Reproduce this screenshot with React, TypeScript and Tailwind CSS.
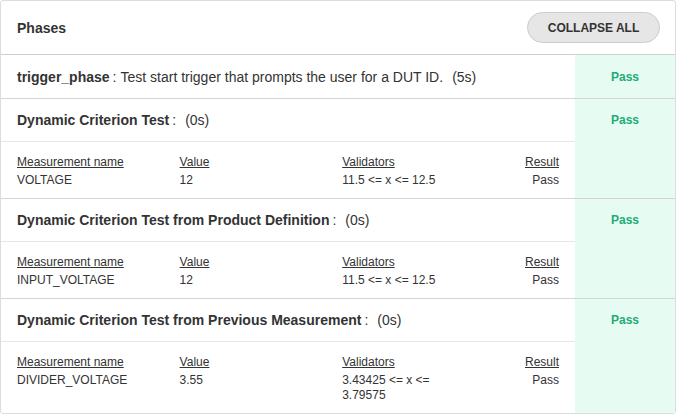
import React from "react";

interface Measurement {
  name: string;
  value: string;
  validators: string;
  result: string;
}

interface Phase {
  name: string;
  description?: string;
  duration: string;
  status: string;
  measurements?: Measurement[];
}

const phases: Phase[] = [
  {
    name: "trigger_phase",
    description: "Test start trigger that prompts the user for a DUT ID.",
    duration: "(5s)",
    status: "Pass",
  },
  {
    name: "Dynamic Criterion Test",
    duration: "(0s)",
    status: "Pass",
    measurements: [{ name: "VOLTAGE", value: "12", validators: "11.5 <= x <= 12.5", result: "Pass" }],
  },
  {
    name: "Dynamic Criterion Test from Product Definition",
    duration: "(0s)",
    status: "Pass",
    measurements: [{ name: "INPUT_VOLTAGE", value: "12", validators: "11.5 <= x <= 12.5", result: "Pass" }],
  },
  {
    name: "Dynamic Criterion Test from Previous Measurement",
    duration: "(0s)",
    status: "Pass",
    measurements: [
      { name: "DIVIDER_VOLTAGE", value: "3.55", validators: "3.43425 <= x <= 3.79575", result: "Pass" },
    ],
  },
];

function MeasurementTable({ rows }: { rows: Measurement[] }) {
  return (
    <div className="border-t border-[#e6e6e6] px-4 pt-[13px] pb-[10px] text-xs leading-[15px] text-[#333]">
      <div className="grid grid-cols-[30%_30%_25%_15%] gap-y-[3px]">
        <div className="underline">Measurement name</div>
        <div className="underline">Value</div>
        <div className="underline">Validators</div>
        <div className="text-right underline">Result</div>
        {rows.map((m) => (
          <React.Fragment key={m.name}>
            <div>{m.name}</div>
            <div>{m.value}</div>
            <div className="pr-2">{m.validators}</div>
            <div className="text-right">{m.result}</div>
          </React.Fragment>
        ))}
      </div>
    </div>
  );
}

export default function App() {
  return (
    <div className="w-[676px] bg-white font-['Liberation_Sans',Arial,sans-serif] text-[#333]">
      <div className="rounded-[3px] border border-[#dcdcdc]">
        {/* Header */}
        <div className="flex h-[54px] items-center justify-between border-b border-[#cfcfcf] pl-4 pr-[15px]">
          <h2 className="text-sm font-bold">Phases</h2>
          <button className="h-[31px] w-[133px] rounded-full border border-[#cccccc] bg-[#e6e6e6] text-xs font-bold uppercase text-[#333]">
            Collapse all
          </button>
        </div>

        {phases.map((p, i) => (
          <div
            key={p.name}
            className={`flex ${i < phases.length - 1 ? "border-b border-[#d4d4d4]" : ""}`}
          >
            <div className="min-w-0 flex-1">
              <div className={`flex items-center px-4 text-sm ${i === 0 ? "h-[43px]" : "h-[42px]"}`}>
                <span className="font-bold">{p.name}</span>
                <span className="ml-[3px]">:</span>
                {p.description && <span className="ml-1">{p.description}</span>}
                <span className="ml-[9px]">{p.duration}</span>
              </div>
              {p.measurements && <MeasurementTable rows={p.measurements} />}
            </div>
            <div className="w-[100px] shrink-0 bg-[#e6fbf2]">
              <div className={`flex items-center justify-center text-xs font-bold text-[#21ab77] ${i === 0 ? "h-[43px]" : "h-[42px]"}`}>
                {p.status}
              </div>
            </div>
          </div>
        ))}
      </div>
    </div>
  );
}
